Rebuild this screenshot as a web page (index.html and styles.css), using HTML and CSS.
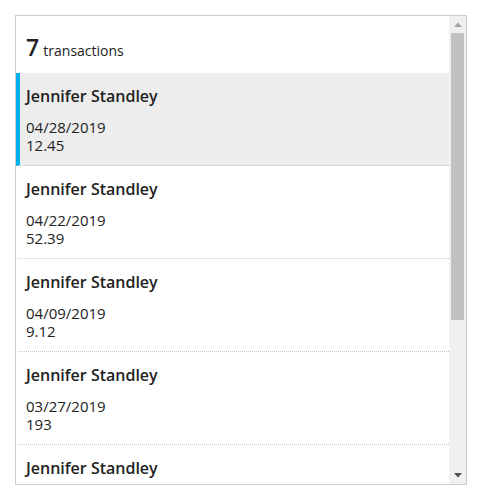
FILE: index.html
```html
<!DOCTYPE html>
<html lang="en">
<head>
<meta charset="utf-8">
<title>Transactions</title>
<link rel="stylesheet" href="styles.css">
</head>
<body>
<div class="panel">
  <div class="viewport">
    <div class="header"><span class="count">7</span> <span class="label">transactions</span></div>
    <ul class="list">
      <li class="item selected">
        <div class="name">Jennifer Standley</div>
        <div class="meta"><div>04/28/2019</div><div>12.45</div></div>
      </li>
      <li class="item">
        <div class="name">Jennifer Standley</div>
        <div class="meta"><div>04/22/2019</div><div>52.39</div></div>
      </li>
      <li class="item">
        <div class="name">Jennifer Standley</div>
        <div class="meta"><div>04/09/2019</div><div>9.12</div></div>
      </li>
      <li class="item">
        <div class="name">Jennifer Standley</div>
        <div class="meta"><div>03/27/2019</div><div>193</div></div>
      </li>
      <li class="item">
        <div class="name">Jennifer Standley</div>
        <div class="meta"><div>03/14/2019</div><div>27.80</div></div>
      </li>
    </ul>
  </div>
  <div class="scrollbar" aria-hidden="true">
    <div class="sb-btn">
      <svg width="8" height="5" viewBox="0 0 8 5"><path d="M0 5 L4 0.5 L8 5 Z" fill="#a3a3a3"/></svg>
    </div>
    <div class="sb-track"><div class="sb-thumb"></div></div>
    <div class="sb-btn">
      <svg width="8" height="5" viewBox="0 0 8 5"><path d="M0 0 L8 0 L4 4.5 Z" fill="#505050"/></svg>
    </div>
  </div>
</div>
</body>
</html>
```

FILE: styles.css
```css
html, body {
  margin: 0;
  padding: 0;
  background: #fff;
}
body {
  font-family: "Open Sans", "Noto Sans", sans-serif;
  color: #222222;
}
.panel {
  margin: 15px 0 0 15px;
  width: 450px;
  height: 468px;
  border: 1px solid #cccccc;
  display: flex;
}
.viewport {
  flex: 1;
  min-width: 0;
  overflow: hidden;
}
.scrollbar {
  width: 17px;
  flex: none;
  background: #f0f0f0;
  display: flex;
  flex-direction: column;
}
.sb-btn {
  height: 17px;
  display: flex;
  align-items: center;
  justify-content: center;
}
.sb-btn svg {
  display: block;
}
.sb-track {
  flex: 1;
  padding: 0 2px;
}
.sb-thumb {
  height: 287px;
  background: #c1c1c1;
}
.header {
  height: 57px;
  box-sizing: border-box;
  padding: 18px 10px 0;
  line-height: 26px;
}
.count {
  font-size: 23px;
  font-weight: 600;
}
.label {
  font-size: 14px;
}
.list {
  list-style: none;
  margin: 0;
  padding: 0;
}
.item {
  box-sizing: border-box;
  height: 93px;
  padding: 12px 10px 11px 6px;
  border-left: 4px solid transparent;
  border-bottom: 1px dotted #c4c4c4;
}
.item.selected {
  background: #ededed;
  border-left-color: #00b0ee;
}
.name {
  font-size: 16px;
  font-weight: 600;
  line-height: 22px;
}
.meta {
  margin-top: 11px;
  font-size: 15px;
  line-height: 18px;
}
```
